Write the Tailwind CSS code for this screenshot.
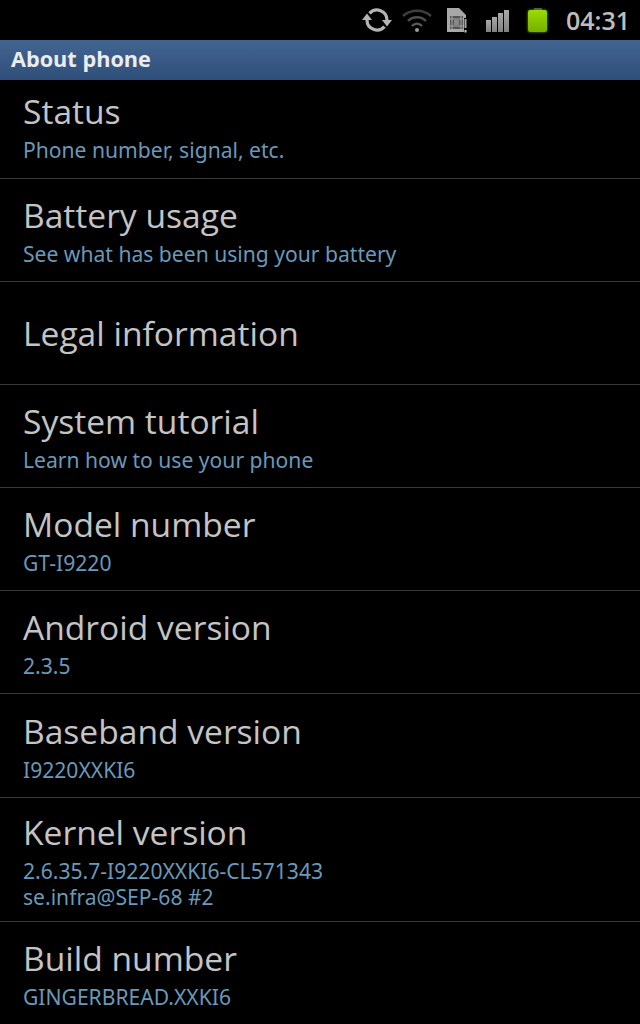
<!DOCTYPE html>
<html lang="en">
<head>
    <meta charset="UTF-8">
    <meta name="viewport" content="width=device-width, initial-scale=1.0">
    <title>About phone</title>
    <script src="https://cdn.jsdelivr.net/npm/@tailwindcss/browser@4"></script>
</head>
<body class="bg-black w-[640px] h-[1024px] overflow-hidden font-['Open_Sans','Noto_Sans',sans-serif]">

    <!-- Status bar -->
    <div class="h-10 relative">
        <svg class="absolute left-[362px] top-[7px]" width="30" height="28" viewBox="0 0 30 28" fill="none">
            <path d="M7.5 6.4A10 10 0 0 1 25 13M22.5 19.6A10 10 0 0 1 5 13" stroke="#b4b4b4" stroke-width="3.2"/>
            <path d="M20 13h10l-5 6.5zM0 13h10L5 6.5z" fill="#b4b4b4"/>
        </svg>
        <svg class="absolute left-[401px] top-[7px]" width="32" height="26" viewBox="0 0 32 26" fill="none">
            <path d="M2 9c8-7 20-7 28 0" stroke="#3e3e3e" stroke-width="2.4"/>
            <path d="M7 14c5-5 13-5 18 0" stroke="#4e4e4e" stroke-width="2.4"/>
            <path d="M11 19c3-3 7-3 10 0" stroke="#5c5c5c" stroke-width="2.4"/>
            <circle cx="16" cy="23" r="2" fill="#9a9a9a"/>
        </svg>
        <svg class="absolute left-[447px] top-[8px]" width="21" height="25" viewBox="0 0 21 25">
            <path d="M0 0h12l7 7v17H0z" fill="#a8a8a8"/>
            <rect x="3" y="8" width="13" height="13" fill="#555"/>
            <path d="M5 8v13M14 8v13M3 11h13M3 18h13" stroke="#a8a8a8" stroke-width="1"/>
            <rect x="7" y="12" width="5" height="5" fill="#888"/>
            <rect x="17" y="10" width="3" height="15" fill="#000"/>
            <rect x="17.5" y="11" width="2" height="9" fill="#a8a8a8"/>
            <rect x="17.5" y="22" width="2" height="2.5" fill="#c8c8c8"/>
        </svg>
        <div class="absolute left-[486px] top-[10px] flex items-end gap-[1px] h-[22px]">
            <div class="w-[5px] h-[12px] bg-gradient-to-b from-[#a8a8a8] to-[#808080]"></div>
            <div class="w-[5px] h-[15px] bg-gradient-to-b from-[#a8a8a8] to-[#808080]"></div>
            <div class="w-[5px] h-[19px] bg-gradient-to-b from-[#a8a8a8] to-[#808080]"></div>
            <div class="w-[5px] h-[22px] bg-gradient-to-b from-[#a8a8a8] to-[#808080]"></div>
        </div>
        <div class="absolute left-[528px] top-[8px] w-[19px] flex flex-col items-center">
            <div class="w-[8px] h-[2px] bg-[#4f4f4f]"></div>
            <div class="w-[19px] h-[22px] rounded-[2px] bg-gradient-to-b from-[#9bdc00] to-[#74b000] shadow-[0_0_3px_#6f9f00]"></div>
        </div>
        <span class="absolute left-[566px] top-[3px] text-[25px] font-semibold leading-[34px] text-[#bdbdbd]">04:31</span>
    </div>

    <!-- Title bar -->
    <div class="h-10 px-[11px] pb-[3px] flex items-center bg-gradient-to-b from-[#426591] to-[#2f4f7a]">
        <h1 class="text-[21.7px] font-bold text-[#ececec] leading-none">About phone</h1>
    </div>

    <!-- Settings list -->
    <div class="flex flex-col">
        <div class="h-[99px] px-[23px] pt-[9px] border-b border-[#3a3a3a]">
            <p class="text-[33.6px] leading-[44px] text-[#c4c4c4]">Status</p>
            <p class="font-['Noto_Sans'] text-[21.1px] leading-[34px] text-[#6b98b8]">Phone number, signal, etc.</p>
        </div>
        <div class="h-[103px] px-[23px] pt-[14px] border-b border-[#3a3a3a]">
            <p class="text-[33.6px] leading-[44px] text-[#c4c4c4]">Battery usage</p>
            <p class="font-['Noto_Sans'] text-[21.1px] leading-[34px] text-[#6b98b8]">See what has been using your battery</p>
        </div>
        <div class="h-[103px] px-[23px] flex items-center border-b border-[#3a3a3a]">
            <p class="text-[33.6px] leading-[44px] text-[#c4c4c4]">Legal information</p>
        </div>
        <div class="h-[103px] px-[23px] pt-[14px] border-b border-[#3a3a3a]">
            <p class="text-[33.6px] leading-[44px] text-[#c4c4c4]">System tutorial</p>
            <p class="font-['Noto_Sans'] text-[21.1px] leading-[34px] text-[#6b98b8]">Learn how to use your phone</p>
        </div>
        <div class="h-[103px] px-[23px] pt-[14px] border-b border-[#3a3a3a]">
            <p class="text-[33.6px] leading-[44px] text-[#c4c4c4]">Model number</p>
            <p class="font-['Noto_Sans'] text-[21.1px] leading-[34px] text-[#6b98b8]">GT-I9220</p>
        </div>
        <div class="h-[103px] px-[23px] pt-[14px] border-b border-[#3a3a3a]">
            <p class="text-[33.6px] leading-[44px] text-[#c4c4c4]">Android version</p>
            <p class="font-['Noto_Sans'] text-[21.1px] leading-[34px] text-[#6b98b8]">2.3.5</p>
        </div>
        <div class="h-[104px] px-[23px] pt-[15px] border-b border-[#3a3a3a]">
            <p class="text-[33.6px] leading-[44px] text-[#c4c4c4]">Baseband version</p>
            <p class="font-['Noto_Sans'] text-[21.1px] leading-[34px] text-[#6b98b8]">I9220XXKI6</p>
        </div>
        <div class="h-[124px] px-[23px] pt-[12px] border-b border-[#3a3a3a]">
            <p class="text-[33.6px] leading-[44px] text-[#c4c4c4]">Kernel version</p>
            <p class="font-['Noto_Sans'] text-[21.1px] leading-[26px] mt-[4px] text-[#6b98b8]">2.6.35.7-I9220XXKI6-CL571343<br>se.infra@SEP-68 #2</p>
        </div>
        <div class="h-[103px] px-[23px] pt-[14px]">
            <p class="text-[33.6px] leading-[44px] text-[#c4c4c4]">Build number</p>
            <p class="font-['Noto_Sans'] text-[21.1px] leading-[34px] text-[#6b98b8]">GINGERBREAD.XXKI6</p>
        </div>
    </div>

</body>
</html>
